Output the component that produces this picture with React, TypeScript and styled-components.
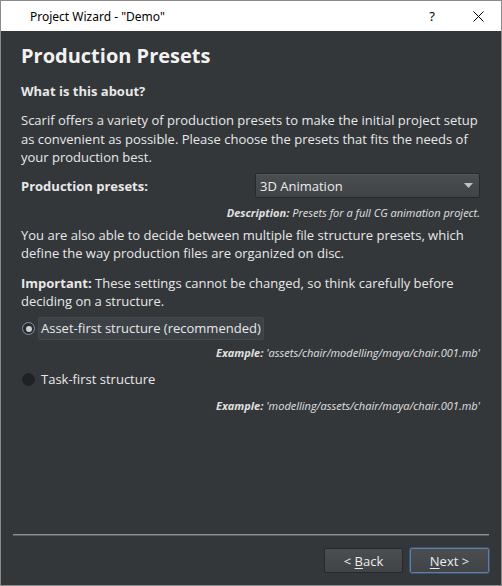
import React from "react";
import styled, { createGlobalStyle } from "styled-components";

const Global = createGlobalStyle`
  html, body { margin: 0; padding: 0; background: #ffffff; }
  body { width: 502px; height: 586px; overflow: hidden; }
  * { box-sizing: border-box; }
`;

const Window = styled.div`
  width: 502px;
  height: 586px;
  border: 1px solid #8a8a8a;
  display: flex;
  flex-direction: column;
  font-family: "Open Sans", "Noto Sans", sans-serif;
`;

const TitleBar = styled.div`
  height: 30px;
  flex: none;
  background: #ffffff;
  display: flex;
  align-items: center;
  padding-left: 29px;
  font-family: "Noto Sans", "Open Sans", sans-serif;
  font-size: 12px;
  color: #000;
`;

const TitleText = styled.div`
  flex: 1;
`;

const TitleButton = styled.div<{ $w: number }>`
  width: ${(p) => p.$w}px;
  height: 30px;
  display: flex;
  align-items: center;
  justify-content: center;
  font-size: 13px;
`;

const Body = styled.div`
  flex: 1;
  background: #33373a;
  color: #e8e8e8;
  display: flex;
  flex-direction: column;
  padding: 11px 12px 12px 11px;
`;

const Content = styled.div`
  flex: 1;
  padding: 0 9px 0 9px;
  display: flex;
  flex-direction: column;
`;

const Heading = styled.h1`
  margin: 0;
  font-size: 20px;
  font-weight: 700;
  line-height: 28px;
  color: #f2f2f2;
`;

const SubHeading = styled.div`
  margin-top: 12px;
  font-size: 13px;
  font-weight: 700;
  line-height: 18px;
`;

const Para = styled.p<{ $mt?: number }>`
  margin: ${(p) => p.$mt ?? 0}px 0 0 0;
  font-size: 13px;
  line-height: 18.5px;
`;

const Strong = styled.span`
  font-weight: 700;
`;

const FormRow = styled.div`
  margin-top: 6px;
  display: flex;
  align-items: center;
  height: 26px;
`;

const FormLabel = styled.div`
  width: 234px;
  font-size: 13px;
  font-weight: 700;
`;

const Combo = styled.div`
  flex: 1;
  height: 25px;
  border: 1px solid #26292b;
  border-radius: 2px;
  background: linear-gradient(#4a4e51, #3f4346);
  box-shadow: inset 0 1px 0 rgba(255, 255, 255, 0.06);
  display: flex;
  align-items: center;
  padding: 0 6px 0 4px;
  font-size: 13px;
  color: #ececec;
`;

const ComboText = styled.div`
  flex: 1;
`;

const Note = styled.div<{ $mt?: number }>`
  margin-top: ${(p) => p.$mt ?? 0}px;
  text-align: right;
  font-size: 11px;
  font-style: italic;
  line-height: 14px;
  color: #e0e0e0;
`;

const RadioRow = styled.div<{ $mt?: number }>`
  margin-top: ${(p) => p.$mt ?? 0}px;
  display: flex;
  align-items: center;
  height: 22px;
  margin-left: 1px;
`;

const RadioDot = styled.div<{ $on: boolean }>`
  width: 13px;
  height: 13px;
  border-radius: 50%;
  flex: none;
  background: ${(p) => (p.$on ? "#2a2d30" : "#1f2225")};
  border: 1px solid ${(p) => (p.$on ? "#7e93ad" : "#1f2225")};
  display: flex;
  align-items: center;
  justify-content: center;
  &::after {
    content: "";
    width: 6px;
    height: 6px;
    border-radius: 50%;
    background: ${(p) => (p.$on ? "#d0d0d0" : "transparent")};
  }
`;

const RadioLabel = styled.div<{ $focus: boolean }>`
  margin-left: 3px;
  padding: 1px 2px 2px 2px;
  font-size: 13px;
  line-height: 18px;
  border-radius: 2px;
  background: ${(p) => (p.$focus ? "#3c4146" : "transparent")};
  border: 1px solid ${(p) => (p.$focus ? "#42484e" : "transparent")};
`;

const Separator = styled.div`
  height: 2px;
  margin: 0 0 0 1px;
  background: #8c9196;
  border-bottom: 1px solid #5a5f63;
`;

const Buttons = styled.div`
  display: flex;
  justify-content: flex-end;
  gap: 7px;
  margin-top: 12px;
`;

const Button = styled.div<{ $default?: boolean }>`
  width: 79px;
  height: 25px;
  border-radius: 2px;
  border: 1px solid ${(p) => (p.$default ? "#5d7fa6" : "#26292b")};
  background: linear-gradient(#4a4e51, #404447);
  box-shadow: ${(p) => (p.$default ? "0 0 0 1px #3d5370" : "none")};
  display: flex;
  align-items: center;
  justify-content: center;
  font-size: 13px;
  color: #ececec;
  u { text-decoration: underline; text-underline-offset: 2px; }
`;

export default function App() {
  return (
    <>
      <Global />
      <Window>
        <TitleBar>
          <TitleText>Project Wizard - "Demo"</TitleText>
          <TitleButton $w={46}>?</TitleButton>
          <TitleButton $w={46}>
            <svg width="11" height="11" viewBox="0 0 11 11">
              <path d="M0.5 0.5 L10.5 10.5 M10.5 0.5 L0.5 10.5" stroke="#000" strokeWidth="1" />
            </svg>
          </TitleButton>
        </TitleBar>
        <Body>
          <Content>
            <Heading>Production Presets</Heading>
            <SubHeading>What is this about?</SubHeading>
            <Para $mt={11}>
              Scarif offers a variety of production presets to make the initial project setup as
              convenient as possible. Please choose the presets that fits the needs of your
              production best.
            </Para>
            <FormRow>
              <FormLabel>Production presets:</FormLabel>
              <Combo>
                <ComboText>3D Animation</ComboText>
                <svg width="9" height="5" viewBox="0 0 9 5">
                  <path d="M0 0 L9 0 L4.5 5 Z" fill="#bfc2c4" />
                </svg>
              </Combo>
            </FormRow>
            <Note $mt={7}>
              <Strong>Description:</Strong> Presets for a full CG animation project.
            </Note>
            <Para $mt={6}>
              You are also able to decide between multiple file structure presets, which define
              the way production files are organized on disc.
            </Para>
            <Para $mt={11}>
              <Strong>Important:</Strong> These settings cannot be changed, so think carefully
              before deciding on a structure.
            </Para>
            <RadioRow $mt={7}>
              <RadioDot $on />
              <RadioLabel $focus>Asset-first structure (recommended)</RadioLabel>
            </RadioRow>
            <Note $mt={6}>
              <Strong>Example:</Strong> 'assets/chair/modelling/maya/chair.001.mb'
            </Note>
            <RadioRow $mt={9}>
              <RadioDot $on={false} />
              <RadioLabel $focus={false}>Task-first structure</RadioLabel>
            </RadioRow>
            <Note $mt={8}>
              <Strong>Example:</Strong> 'modelling/assets/chair/maya/chair.001.mb'
            </Note>
          </Content>
          <Separator />
          <Buttons>
            <Button>
              &lt;&nbsp;<u>B</u>ack
            </Button>
            <Button $default>
              <u>N</u>ext&nbsp;&gt;
            </Button>
          </Buttons>
        </Body>
      </Window>
    </>
  );
}
